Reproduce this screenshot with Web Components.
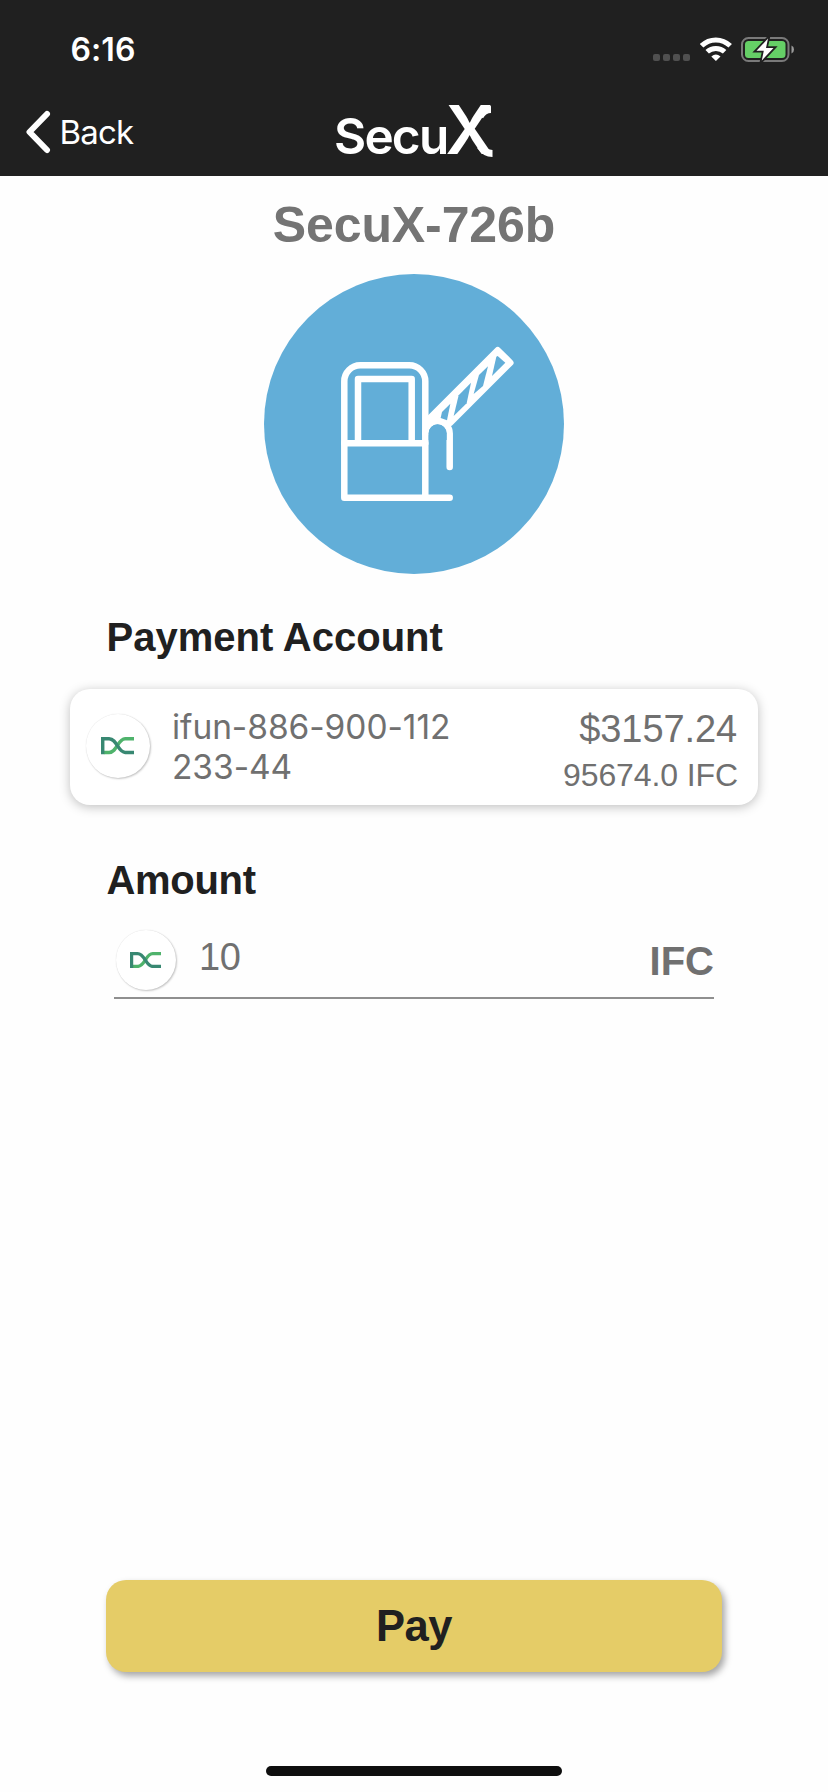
<!DOCTYPE html>
<html lang="en">
<head>
<meta charset="utf-8">
<title>SecuX payment</title>
<style>
  html, body { margin: 0; padding: 0; background: #fefefe; }
  body { width: 828px; height: 1792px; overflow: hidden; font-family: "Liberation Sans", Arial, sans-serif; color: #707070; }
</style>
</head>
<body>
<pay-screen></pay-screen>
<script>
const define = (name, html) => {
  const template = document.createElement('template');
  template.innerHTML = html;
  customElements.define(name, class extends HTMLElement {
    constructor() {
      super();
      this.attachShadow({ mode: 'open' }).append(template.content.cloneNode(true));
    }
  });
};

define('status-bar', `
<style>
  :host { display: flex; height: 88px; box-sizing: border-box; padding: 0 33px 0 70.5px; justify-content: space-between; }
  .time { font: 600 32px/99px Inter, sans-serif; color: #fff; letter-spacing: 0.1px; }
  .icons { display: flex; gap: 9px; padding-top: 36px; height: 27px; }
  svg { display: block; }
</style>
<span class="time"><slot></slot></span>
<div class="icons">
  <svg width="38" height="27" fill="#505050"><rect x="0" y="18" width="7" height="7" rx="2"/><rect x="10" y="18" width="7" height="7" rx="2"/><rect x="20" y="18" width="7" height="7" rx="2"/><rect x="30" y="18" width="7" height="7" rx="2"/></svg>
  <svg width="32" height="27" fill="none" stroke="#fff" stroke-width="5"><path d="M1.600 9.800C9.600 1.900 22 1.900 30.200 9.800"/><path d="M7.200 15.800C12 11.300 19.800 11.300 24.600 15.800"/><path d="M15.900 25L11.300 20.400Q15.900 16.400 20.500 20.400Z" fill="#fff" stroke="none"/></svg>
  <svg width="54" height="27"><rect x="1" y="2" width="46.5" height="23" rx="6.5" fill="none" stroke="#7a7a7a" stroke-width="2"/><rect x="4" y="5" width="40.5" height="17" rx="3.5" fill="#65cf66"/><path d="M50.500 9.500Q53 10.500 53 13.500T50.500 17.500Z" fill="#9b9b9b"/><path d="M27 2.500L15.500 14.800H22.800L20.800 24.500L32.500 12H25Z" fill="#fff" stroke="#202020" stroke-width="3.600" paint-order="stroke"/></svg>
</div>`);

define('secux-logo', `
<style>
  :host { display: grid; width: 160px; height: 56px; }
  .word, svg { grid-area: 1 / 1; }
  .word { display: flex; align-items: baseline; font: 600 49.500px/56px Inter, sans-serif; color: #fff; }
  .secu { width: 112px; letter-spacing: -1.800px; }
  .x { width: 48px; font-size: 67px; line-height: 52px; margin-left: -.5px; }
  svg { display: block; overflow: visible; }
</style>
<div class="word"><span class="secu">Secu</span><span class="x">X</span></div>
<svg width="160" height="56" viewBox="0 0 160 56">
  <path d="M146 12.500Q150 5.500 157 5.500M146 42Q151 49.500 158.500 49.500" fill="none" stroke="#fff" stroke-width="7"/>
</svg>`);

define('nav-bar', `
<style>
  :host { display: grid; grid-template-columns: 1fr 160px 1fr; align-items: center; height: 88px; }
  .back { display: flex; align-items: center; gap: 9px; padding-left: 24.500px; font: 400 33px/44px Inter, sans-serif; letter-spacing: -0.8px; color: #fff; }
  svg { display: block; }
</style>
<div class="back">
  <svg width="26" height="44" fill="none" stroke="#fff" stroke-width="6" stroke-linecap="round" stroke-linejoin="round"><path d="M22 4L4.500 22L22 40"/></svg>
  <span><slot></slot></span>
</div>
<secux-logo></secux-logo>`);

define('barrier-badge', `
<style>
  :host { display: block; width: 300px; height: 300px; border-radius: 50%; background: #62aed8; }
  svg { display: block; }
</style>
<svg width="300" height="300" fill="none" stroke="#fff" stroke-width="6.500" stroke-linecap="round" stroke-linejoin="round">
  <path d="M185.700 223.700H80.300V107.300A16 16 0 0 1 96.300 91.300H145.300A16 16 0 0 1 161.300 107.300V223.700"/>
  <path d="M80.300 169.300H161.300M94 169.300V105H147.700V169.300"/>
  <path d="M161.300 159.500A12.200 12.400 0 0 1 185.700 159.500V193"/>
  <path d="M162.900 147L233.700 76.200L246.300 88.700L186 149L174 147Z" fill="#fff"/>
  <g transform="translate(66 66) scale(.33333)" fill="#62aed8" stroke="none">
    <path d="M361 191L336 216L332 234L351 241Z"/>
    <path d="M423 128L386 166L371 228L410 190Z"/>
    <path d="M474 79L447 105L431 162L459 138Z"/>
    <path d="M503 48L526 68L486 108L499 50Z"/>
    <path d="M296 280A27 27 0 0 1 350 280V300H296Z"/>
  </g>
</svg>`);

define('coin-badge', `
<style>
  :host { display: flex; flex: none; width: var(--size, 64px); height: var(--size, 64px); align-items: center; justify-content: center; border-radius: 50%; background: #fff; box-shadow: 1px 1px 2px rgba(0,0,0,.22), 0 0 1px rgba(0,0,0,.14); }
  svg { display: block; width: 52%; }
</style>
<svg viewBox="0 0 33 17" fill="none" stroke-width="3.400">
  <path stroke="#4fb36c" d="M3 15.300H8C16 15.300 16.500 1.700 24 1.700H33"/>
  <path stroke="#388872" d="M1.700 17V1.700H8C16 1.700 16.500 15.300 24 15.300H33"/>
</svg>`);

define('section-title', `
<style>
  :host { display: block; font-size: 40px; line-height: 48px; font-weight: 700; color: #202020; }
</style><slot></slot>`);

define('account-card', `
<style>
  :host { display: flex; box-sizing: border-box; height: 116px; padding: 0 20px 0 15.500px; border-radius: 20px; background: #fff; box-shadow: 0 2px 11px rgba(0,0,0,.25); }
  coin-badge { margin-top: 25px; }
  .name { width: 290px; margin: 18px 0 0 22.500px; font: 400 33.500px/40px Inter, sans-serif; letter-spacing: -.06px; }
  .funds { flex: 1; text-align: right; padding-top: 18px; }
  .fiat { font-size: 38px; line-height: 44px; margin-right: 1px; letter-spacing: -.1px; }
  .tokens { font-size: 32px; line-height: 44px; margin-top: 2px; letter-spacing: -.1px; }
</style>
<coin-badge></coin-badge>
<div class="name"><slot name="account"></slot></div>
<div class="funds"><div class="fiat"><slot name="fiat"></slot></div><div class="tokens"><slot name="tokens"></slot></div></div>`);

define('amount-field', `
<style>
  :host { display: flex; box-sizing: border-box; height: 71px; border-bottom: 2px solid #8f8f8f; }
  coin-badge { --size: 60px; margin: 2px 0 0 1.500px; }
  .value { flex: 1; margin: 7px 0 0 23.500px; font-size: 38px; line-height: 44px; letter-spacing: -.5px; }
  .unit { font-size: 40px; line-height: 48px; font-weight: 700; margin-top: 9px; }
</style>
<coin-badge></coin-badge>
<span class="value"><slot></slot></span>
<span class="unit"><slot name="unit"></slot></span>`);

define('pay-button', `
<style>
  :host { display: block; }
  button { display: block; width: 100%; height: 92px; padding: 0; border: 0; border-radius: 20px; background: #e5cc67; color: #202020; font: 700 43.500px/92px "Liberation Sans", Arial, sans-serif; letter-spacing: -.5px; box-shadow: 3px 4px 7px rgba(0,0,0,.35); }
</style><button><slot></slot></button>`);

define('pay-screen', `
<style>
  :host { display: flex; flex-direction: column; width: 828px; height: 1792px; background: #fefefe; }
  header { background: #202020; height: 176px; }
  main { display: flex; flex-direction: column; flex: 1; }
  h1 { margin: 19px 0 0; text-align: center; font-size: 50px; line-height: 60px; font-weight: 700; color: #747474; letter-spacing: -.1px; }
  barrier-badge { align-self: center; margin-top: 19px; }
  section-title { margin-left: 106.500px; }
  .first { margin-top: 39px; }
  account-card { margin: 28px 70px 0; }
  .second { margin-top: 51px; letter-spacing: -.3px; }
  amount-field { margin: 24px 114px 0; }
  pay-button { margin: auto 106px 94px; }
  .home { align-self: center; width: 296px; height: 10px; margin-bottom: 16px; border-radius: 5px; background: #0e0e0e; }
</style>
<header>
  <status-bar>6:16</status-bar>
  <nav-bar>Back</nav-bar>
</header>
<main>
  <h1>SecuX-726b</h1>
  <barrier-badge></barrier-badge>
  <section-title class="first">Payment Account</section-title>
  <account-card>
    <span slot="account">ifun-886-900-112<br>233-44</span>
    <span slot="fiat">$3157.24</span>
    <span slot="tokens">95674.0 IFC</span>
  </account-card>
  <section-title class="second">Amount</section-title>
  <amount-field>10<span slot="unit">IFC</span></amount-field>
  <pay-button>Pay</pay-button>
  <div class="home"></div>
</main>`);
</script>
</body>
</html>
